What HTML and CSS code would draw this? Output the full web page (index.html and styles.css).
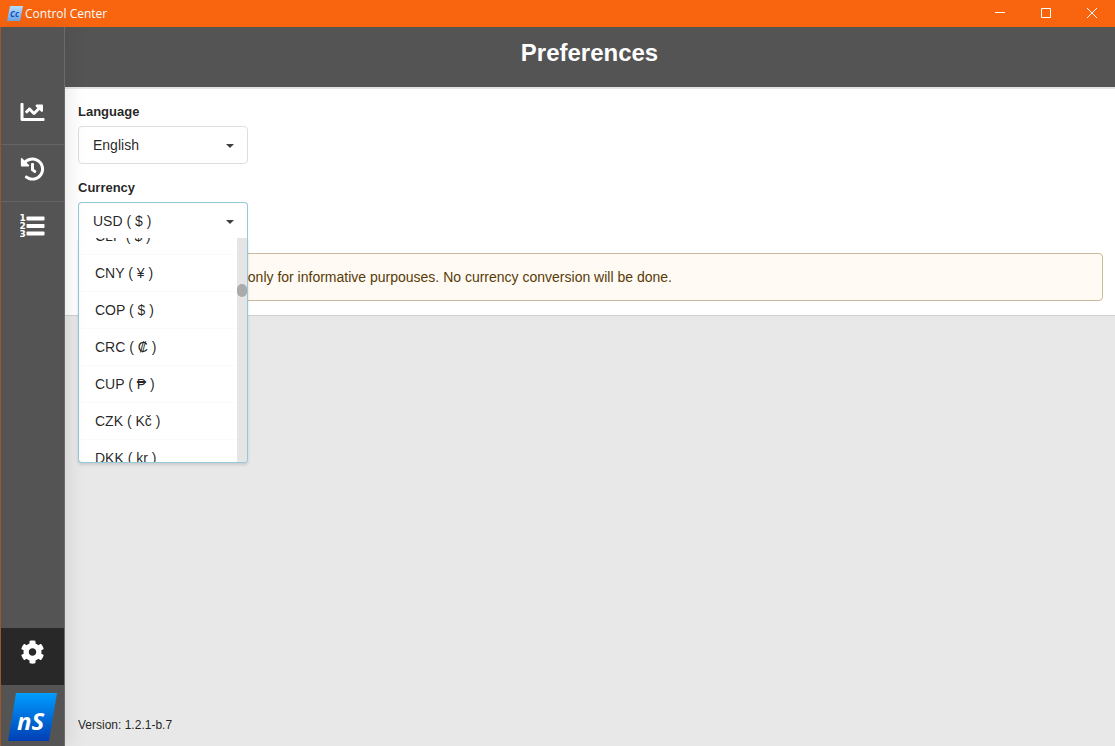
FILE: index.html
```html
<!DOCTYPE html>
<html lang="en">

<head>
    <meta charset="UTF-8">
    <meta name="viewport" content="width=device-width, initial-scale=1.0">
    <title>Control Center</title>

    <link rel="stylesheet" href="styles.css">
</head>

<body>

    <!-- Window title bar -->
    <header class="titlebar">
        <svg class="app-icon" viewBox="0 0 16 16" aria-hidden="true">
            <defs>
                <linearGradient id="app-fill" x1="0" y1="0" x2="0" y2="1">
                    <stop offset="0" stop-color="#b5dcfb" />
                    <stop offset="1" stop-color="#6fa8ea" />
                </linearGradient>
            </defs>
            <polygon points="3,0 16,0 13,15 0,15" fill="url(#app-fill)" />
            <text class="app-letters" x="3" y="11">Cc</text>
        </svg>
        <span class="app-name">Control Center</span>
        <div class="window-controls">
            <button type="button" aria-label="Minimize">
                <svg viewBox="0 0 12 12"><path d="M1 5.5h10" /></svg>
            </button>
            <button type="button" aria-label="Maximize">
                <svg viewBox="0 0 12 12"><path d="M1.5 1.5h9v9h-9z" /></svg>
            </button>
            <button type="button" aria-label="Close">
                <svg viewBox="0 0 12 12"><path d="M1 1l10 10M11 1L1 11" /></svg>
            </button>
        </div>
    </header>

    <div class="app">
        <!-- Side menu -->
        <nav class="sidebar">
            <a href="#stats" class="nav-item" aria-label="Statistics">
                <svg viewBox="0 0 512 512"><path d="M496 384H64V80c0-8.84-7.16-16-16-16H16C7.16 64 0 71.16 0 80v336c0 17.67 14.33 32 32 32h464c8.84 0 16-7.16 16-16v-32c0-8.84-7.16-16-16-16zM464 96H345.94c-21.38 0-32.09 25.85-16.97 40.97l32.4 32.4L288 242.75l-73.37-73.37c-12.5-12.5-32.76-12.5-45.25 0l-68.69 68.69c-6.25 6.25-6.25 16.38 0 22.63l22.62 22.62c6.25 6.25 16.38 6.25 22.63 0L192 237.25l73.37 73.37c12.5 12.5 32.76 12.5 45.25 0l96-96 32.4 32.4c15.12 15.12 40.97 4.41 40.97-16.97V112c.01-8.84-7.15-16-15.99-16z" /></svg>
            </a>
            <a href="#history" class="nav-item" aria-label="History">
                <svg viewBox="0 0 512 512"><path d="M504 255.531c.253 136.64-111.18 248.372-247.82 248.468-59.015.042-113.223-20.53-155.822-54.911-11.077-8.94-11.905-25.541-1.839-35.607l11.267-11.267c8.609-8.609 22.353-9.551 31.891-1.984C173.062 425.135 212.781 440 256 440c101.705 0 184-82.311 184-184 0-101.705-82.311-184-184-184-48.814 0-93.149 18.969-126.068 49.932l50.754 50.754c10.08 10.08 2.941 27.314-11.313 27.314H24c-8.837 0-16-7.163-16-16V38.627c0-14.254 17.234-21.393 27.314-11.314l49.372 49.372C129.209 34.136 189.552 8 256 8c136.81 0 247.747 110.78 248 247.531zm-180.912 78.784l9.823-12.63c8.138-10.463 6.253-25.542-4.21-33.679L288 256.349V152c0-13.255-10.745-24-24-24h-16c-13.255 0-24 10.745-24 24v135.651l65.409 50.874c10.463 8.137 25.541 6.253 33.679-4.21z" /></svg>
            </a>
            <a href="#list" class="nav-item" aria-label="List">
                <svg viewBox="0 0 24 24">
                    <rect x="6" y="2.5" width="18" height="4" rx="0.8" />
                    <rect x="6" y="10" width="18" height="4" rx="0.8" />
                    <rect x="6" y="17.5" width="18" height="4" rx="0.8" />
                    <g class="list-digits">
                        <text x="-1" y="7">1</text>
                        <text x="-1" y="15">2</text>
                        <text x="-1" y="23">3</text>
                    </g>
                </svg>
            </a>
            <a href="#preferences" class="nav-item active" aria-label="Preferences">
                <svg viewBox="0 0 512 512"><path d="M487.4 315.7l-42.6-24.6c4.3-23.2 4.3-47 0-70.2l42.6-24.6c4.9-2.8 7.1-8.6 5.5-14-11.1-35.6-30-67.8-54.7-94.6-3.8-4.1-10-5.1-14.8-2.3L380.8 110c-17.9-15.4-38.5-27.3-60.8-35.1V25.8c0-5.6-3.9-10.5-9.4-11.7-36.7-8.2-74.3-7.8-109.2 0-5.5 1.2-9.4 6.1-9.4 11.7V75c-22.2 7.9-42.8 19.8-60.8 35.1L88.7 85.5c-4.9-2.8-11-1.9-14.8 2.3-24.7 26.7-43.6 58.9-54.7 94.6-1.7 5.4.6 11.2 5.5 14L67.3 221c-4.3 23.2-4.3 47 0 70.2l-42.6 24.6c-4.9 2.8-7.1 8.6-5.5 14 11.1 35.6 30 67.8 54.7 94.6 3.8 4.1 10 5.1 14.8 2.3l42.6-24.6c17.9 15.4 38.5 27.3 60.8 35.1v49.2c0 5.6 3.9 10.5 9.4 11.7 36.7 8.2 74.3 7.8 109.2 0 5.5-1.2 9.4-6.1 9.4-11.7v-49.2c22.2-7.9 42.8-19.8 60.8-35.1l42.6 24.6c4.9 2.8 11 1.9 14.8-2.3 24.7-26.7 43.6-58.9 54.7-94.6 1.5-5.5-.7-11.3-5.6-14.1zM256 336c-44.1 0-80-35.9-80-80s35.9-80 80-80 80 35.9 80 80-35.9 80-80 80z" /></svg>
            </a>
            <a href="#about" class="logo" aria-label="nS">
                <svg viewBox="0 0 50 48">
                    <defs>
                        <linearGradient id="logo-fill" x1="0" y1="0" x2="0" y2="1">
                            <stop offset="0" stop-color="#009dff" />
                            <stop offset="1" stop-color="#003fb5" />
                        </linearGradient>
                    </defs>
                    <polygon points="8,0 49,0 41,48 0,48" fill="url(#logo-fill)" />
                    <text class="logo-letters" x="9" y="37">nS</text>
                </svg>
            </a>
        </nav>

        <main class="content">
            <h1>Preferences</h1>

            <form class="segment">
                <div class="field">
                    <label for="language">Language</label>
                    <div class="dropdown">
                        <select id="language">
                            <option>English</option>
                        </select>
                    </div>
                </div>

                <div class="field">
                    <label for="currency">Currency</label>
                    <div class="dropdown open">
                        <select id="currency">
                            <option>USD ( $ )</option>
                        </select>
                        <div class="menu">
                            <div class="menu-list" id="currency-list" role="listbox" aria-label="Currency">
                                <div class="item" role="option">CLP ( $ )</div>
                                <div class="item" role="option">CNY ( ¥ )</div>
                                <div class="item" role="option">COP ( $ )</div>
                                <div class="item" role="option">CRC ( ₡ )</div>
                                <div class="item" role="option">CUP ( ₱ )</div>
                                <div class="item" role="option">CZK ( Kč )</div>
                                <div class="item" role="option">DKK ( kr )</div>
                            </div>
                            <div class="scrollbar"><div class="thumb"></div></div>
                        </div>
                    </div>
                </div>

                <p class="message">The currency symbol is only for informative purpouses. No currency conversion will be done.</p>
            </form>

            <footer class="version">Version: 1.2.1-b.7</footer>
        </main>
    </div>

    <script>
        document.getElementById('currency-list').scrollTop = 20;
    </script>

</body>

</html>
```
FILE: styles.css
```css
/* General Styling */
* {
    box-sizing: border-box;
}

body {
    display: flex;
    flex-direction: column;
    height: 100vh;
    margin: 0;
    overflow: hidden;
    font-family: "Liberation Sans", Arial, sans-serif;
    font-size: 14px;
    color: rgba(0, 0, 0, 0.87);
    background-color: #e8e8e8;
}

/* Title bar */
.titlebar {
    display: flex;
    flex: none;
    align-items: center;
    height: 27px;
    padding-left: 7px;
    background-color: #f9650e;
    color: #ffffff;
}

.app-icon {
    width: 16px;
    height: 16px;
}

.app-letters {
    font: italic bold 8px "Open Sans", sans-serif;
    fill: #0b50c0;
}

.app-name {
    flex: 1;
    padding-left: 2px;
    font-family: "Open Sans", sans-serif;
    font-size: 12px;
    line-height: 26px;
}

.window-controls {
    display: flex;
    height: 100%;
}

.window-controls button {
    display: flex;
    align-items: center;
    justify-content: center;
    width: 46px;
    height: 26px;
    padding: 0;
    border: none;
    background: none;
}

.window-controls svg {
    width: 12px;
    height: 12px;
    fill: none;
    stroke: #ffffff;
}

/* Layout */
.app {
    display: flex;
    flex: 1;
    min-height: 0;
    border-left: 1px solid #a85a2a;
}

/* Side menu */
.sidebar {
    display: flex;
    flex: none;
    flex-direction: column;
    z-index: 1;
    width: 63px;
    padding-top: 61px;
    background-color: #545454;
    box-shadow: 1px 0 0 #6b6b6b, 0 0 20px rgba(34, 36, 38, 0.15);
}

.nav-item {
    display: flex;
    justify-content: center;
    height: 57px;
    padding-top: 12px;
    border-bottom: 1px solid #656565;
}

.nav-item svg {
    width: 25px;
    height: 24px;
    fill: #ffffff;
}

.nav-item:nth-child(3) {
    border-bottom: none;
}

.nav-item.active {
    margin-top: auto;
    border-bottom: none;
    background-color: #282828;
}

.list-digits {
    font: bold 9px "DejaVu Sans", sans-serif;
}

.logo {
    padding: 8px 6px 5px 7px;
}

.logo svg {
    display: block;
    width: 50px;
    height: 48px;
}

.logo-letters {
    font: italic bold 24px "Open Sans", sans-serif;
    fill: #ffffff;
}

/* Content */
.content {
    display: flex;
    flex: 1;
    flex-direction: column;
    min-width: 0;
}

h1 {
    margin: 0;
    padding-bottom: 8px;
    background-color: #545454;
    color: #ffffff;
    font-size: 24px;
    line-height: 52px;
    text-align: center;
}

.segment {
    padding: 13px 12px 14px 14px;
    border-top: 2px solid #e4e4e4;
    border-bottom: 1px solid #cfcfd0;
    background-color: #ffffff;
}

.field {
    margin-bottom: 14px;
}

.field label {
    display: block;
    margin-bottom: 4px;
    font-size: 13px;
    font-weight: bold;
    line-height: 20px;
}

/* Dropdowns */
.dropdown {
    position: relative;
    width: 170px;
}

.dropdown::after {
    content: "";
    position: absolute;
    top: 18px;
    right: 14px;
    border: 4px solid transparent;
    border-top-color: #404040;
    border-bottom: none;
}

.dropdown select {
    display: block;
    width: 100%;
    height: 38px;
    padding: 0 14px;
    border: 1px solid #dededf;
    border-radius: 4px;
    appearance: none;
    background-color: #ffffff;
    color: inherit;
    font: inherit;
}

.dropdown.open select {
    border-color: #96c8da;
    border-bottom: none;
    border-radius: 4px 4px 0 0;
    height: 37px;
}

.menu {
    position: absolute;
    top: 36px;
    left: 0;
    display: flex;
    width: 100%;
    height: 225px;
    overflow: hidden;
    border: 1px solid #96c8da;
    border-top: none;
    border-radius: 0 0 4px 4px;
    background-color: #ffffff;
    box-shadow: 0 2px 3px rgba(34, 36, 38, 0.15);
}

.menu-list {
    flex: 1;
    overflow-y: scroll;
    scrollbar-width: none;
}

.item {
    height: 37px;
    padding: 0 16px;
    border-bottom: 1px solid #fafafa;
    line-height: 36px;
}

.scrollbar {
    width: 10px;
    padding-top: 46px;
    background-color: #e5e5e5;
}

.thumb {
    height: 13px;
    border-radius: 5px;
    background-color: #ababab;
}

/* Message */
.message {
    margin: 0;
    padding: 14px 21px;
    border: 1px solid #c9ba9b;
    border-radius: 4px;
    background-color: #fffaf3;
    color: #573a08;
    line-height: 18px;
}

/* Version */
.version {
    margin-top: auto;
    padding: 0 14px 13px;
    font-size: 12px;
    line-height: 16px;
}
```
